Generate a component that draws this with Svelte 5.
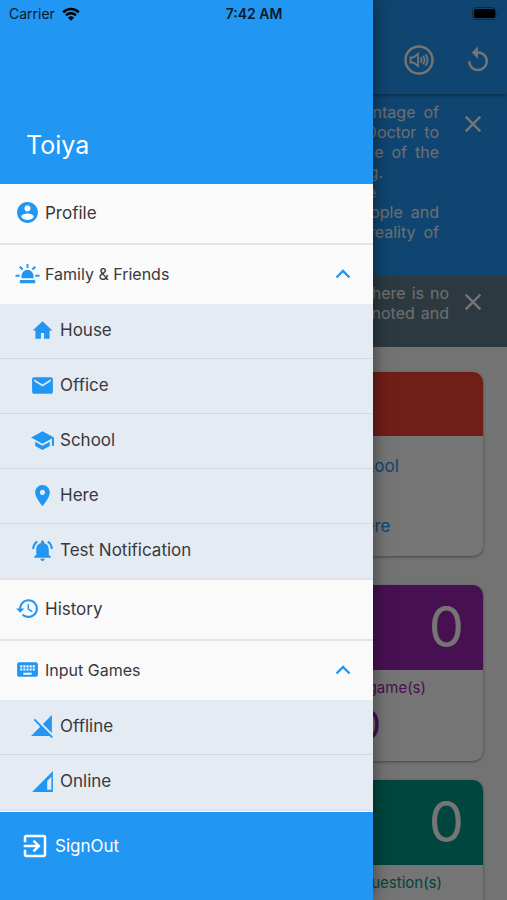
<script lang="ts">
    type Item = { label: string; icon: string; children?: Item[] };

    /** Filled shapes on a 24 unit grid. */
    const icons: Record<string, string> = {
        account: "M12 2C6.48 2 2 6.48 2 12s4.48 10 10 10 10-4.48 10-10S17.52 2 12 2zm0 3c1.66 0 3 1.34 3 3s-1.34 3-3 3-3-1.34-3-3 1.34-3 3-3zm0 14.2c-2.5 0-4.71-1.28-6-3.22.03-1.99 4-3.08 6-3.08 1.99 0 5.97 1.09 6 3.08-1.29 1.94-3.5 3.22-6 3.22z",
        beacon: "M6.2 16.500v-2.200a5.800 5.800 0 0 1 11.600 0v2.200zM5.600 18.300h12.800q1 0 1 1v2H4.600v-2q0-1 1-1zM11.100 2.800h1.800v4h-1.800zM3.900 6.200l1.400-1.400 2.700 2.700L6.600 8.900zM18.700 4.800l1.400 1.400-2.700 2.700L16 7.500zM.5 13.100h4v1.900h-4zM19.500 13.100h4v1.900h-4z",
        home: "M10.500 20v-5.500h3V20h5.300v-8h2.700L12 3l-9.500 9h2.700v8z",
        mail: "M20 4H4c-1.100 0-1.990.9-1.990 2L2 18c0 1.100.9 2 2 2h16c1.100 0 2-.9 2-2V6c0-1.100-.9-2-2-2zm0 4l-8 5-8-5V6l8 5 8-5v2z",
        school: "M5 13.180v4L12 21l7-3.820v-4L12 17l-7-3.820zM12 3L1 9l11 6 9-4.910V17h2V9L12 3z",
        pin: "M12 2C8.130 2 5 5.130 5 9c0 5.250 7 13 7 13s7-7.750 7-13c0-3.870-3.130-7-7-7zm0 9.500c-1.380 0-2.500-1.120-2.500-2.500s1.120-2.500 2.500-2.500 2.500 1.120 2.500 2.500-1.120 2.500-2.500 2.500z",
        bell: "M7.580 4.080L6.150 2.650C3.750 4.480 2.170 7.300 2.030 10.500h2c.15-2.650 1.510-4.970 3.550-6.420zm12.390 6.420h2c-.15-3.200-1.730-6.020-4.120-7.850l-1.420 1.430c2.020 1.450 3.390 3.770 3.540 6.420zM18 11c0-3.070-1.640-5.640-4.500-6.320V4c0-.83-.67-1.500-1.500-1.500s-1.500.67-1.500 1.500v.68C7.630 5.360 6 7.920 6 11v5l-2 2v1h16v-1l-2-2v-5zm-6 11c.14 0 .27-.01.4-.04.65-.14 1.180-.58 1.440-1.180.1-.24.15-.5.15-.78h-4c.01 1.100.9 2 2.010 2z",
        history: "M13 3c-4.970 0-9 4.030-9 9H1l3.890 3.890.07.14L9 12H6c0-3.870 3.130-7 7-7s7 3.130 7 7-3.130 7-7 7c-1.930 0-3.680-.79-4.940-2.060l-1.420 1.420C8.270 19.990 10.510 21 13 21c4.970 0 9-4.030 9-9s-4.030-9-9-9zm-1 5v5l4.280 2.540.72-1.210-3.500-2.080V8H12z",
        keyboard: "M20 5H4c-1.100 0-1.990.9-1.990 2L2 17c0 1.100.9 2 2 2h16c1.100 0 2-.9 2-2V7c0-1.100-.9-2-2-2zm-9 3h2v2h-2V8zm0 3h2v2h-2v-2zM8 8h2v2H8V8zm0 3h2v2H8v-2zm-1 2H5v-2h2v2zm0-3H5V8h2v2zm9 7H8v-2h8v2zm0-4h-2v-2h2v2zm0-3h-2V8h2v2zm3 3h-2v-2h2v2zm0-3h-2V8h2v2z",
        offline: "M21 1l-8.590 8.590L21 18.180V1zM4.770 4.500L3.500 5.770l6.360 6.360L1 21h17.730l2 2L22 21.730 4.770 4.500z",
        online: "M22 2v20H2zM20.500 7.500l-4 4V20h4z",
        exit: "M10.090 15.590L11.500 17l5-5-5-5-1.410 1.410L12.670 11H3v2h9.670l-2.580 2.590zM19 3H5c-1.110 0-2 .9-2 2v4h2V5h14v14H5v-4H3v4c0 1.100.89 2 2 2h14c1.100 0 2-.9 2-2V5c0-1.100-.9-2-2-2z",
        replay: "M12 5V1L7 6l5 5V7c3.310 0 6 2.690 6 6s-2.690 6-6 6-6-2.690-6-6H4c0 4.420 3.580 8 8 8s8-3.580 8-8-3.580-8-8-8z",
        close: "M19 6.410L17.590 5 12 10.590 6.410 5 5 6.410 10.590 12 5 17.590 6.410 19 12 13.410 17.590 19 19 17.590 13.410 12z",
    };

    const menu: Item[] = [
        { label: "Profile", icon: "account" },
        {
            label: "Family & Friends",
            icon: "beacon",
            children: [
                { label: "House", icon: "home" },
                { label: "Office", icon: "mail" },
                { label: "School", icon: "school" },
                { label: "Here", icon: "pin" },
                { label: "Test Notification", icon: "bell" },
            ],
        },
        { label: "History", icon: "history" },
        {
            label: "Input Games",
            icon: "keyboard",
            children: [
                { label: "Offline", icon: "offline" },
                { label: "Online", icon: "online" },
            ],
        },
    ];

    // each line holds its words and the free space after the last one
    const banners = [
        {
            tone: "info",
            lines: [
                { words: ["percentage", "of"], free: 0 },
                { words: ["Doctor", "to"], free: 0 },
                { words: ["me", "of", "the"], free: 0 },
                { words: ["ng."], free: 56 },
                { words: ["e"], free: 63 },
                { words: ["people", "and"], free: 0 },
                { words: ["reality", "of"], free: 0 },
            ],
        },
        {
            tone: "note",
            lines: [
                { words: ["There", "is", "no"], free: 0 },
                { words: ["noted", "and"], free: 0 },
            ],
        },
    ];

    const counters = [
        { tone: "purple", total: 0, caption: "game(s)", free: 57, part: 0 },
        { tone: "teal", total: 0, caption: "question(s)", free: 41 },
    ];

    let open: Record<string, boolean> = $state({
        "Family & Friends": true,
        "Input Games": true,
    });
</script>

{#snippet icon(name: string)}
    <svg class="icon" viewBox="0 0 24 24" aria-hidden="true">
        <path d={icons[name]} fill-rule="evenodd" />
    </svg>
{/snippet}

<div class="screen">
    <main class="page">
        <header class="bar">
            <button class="tool" aria-label="Sound">
                <svg class="sound" viewBox="0 0 30 30" aria-hidden="true">
                    <circle cx="15" cy="15" r="13.500" />
                    <path d="M6.500 12.500h3l4.500-3.700v12.400l-4.500-3.700h-3z" />
                    <path d="M16.500 12.300q2 2.700 0 5.400M19 10.800q3 4.200 0 8.400M21.500 9.300q4.200 5.700 0 11.400" />
                </svg>
            </button>
            <button class="tool" aria-label="Reload">{@render icon("replay")}</button>
        </header>

        {#each banners as banner}
            <section class="banner {banner.tone}">
                <div class="text">
                    {#each banner.lines as line}
                        <p class="line" style:padding-right="{line.free}px">
                            {#each line.words as word}
                                <span>{word}</span>
                            {/each}
                        </p>
                    {/each}
                </div>
                <button class="close" aria-label="Close">{@render icon("close")}</button>
            </section>
        {/each}

        <div class="cards">
            <article class="card red">
                <div class="head"></div>
                <div class="places">
                    <a href="#school">School</a>
                    <a href="#here">Here</a>
                </div>
            </article>
            {#each counters as c}
                <article class="card {c.tone}">
                    <div class="head">{c.total}</div>
                    <div class="stats">
                        <p class="caption" style:padding-right="{c.free}px">{c.caption}</p>
                        {#if c.part !== undefined}
                            <p class="part">{c.part}</p>
                        {/if}
                    </div>
                </article>
            {/each}
        </div>
    </main>

    <div class="scrim"></div>

    <aside class="drawer">
        <header class="user">Toiya</header>
        <nav class="menu">
            {#each menu as item}
                {#if item.children}
                    <button
                        class="row group"
                        aria-expanded={open[item.label]}
                        onclick={() => (open[item.label] = !open[item.label])}
                    >
                        {@render icon(item.icon)}
                        <span class="label">{item.label}</span>
                        <svg class="chevron" class:down={!open[item.label]} viewBox="0 0 16 10" aria-hidden="true">
                            <path d="M1.500 8.500L8 2l6.500 6.500" />
                        </svg>
                    </button>
                    {#if open[item.label]}
                        <div class="sub">
                            {#each item.children as child}
                                <a class="row child" href="#{child.icon}">
                                    {@render icon(child.icon)}
                                    <span class="label">{child.label}</span>
                                </a>
                            {/each}
                        </div>
                    {/if}
                {:else}
                    <a class="row top" href="#{item.icon}">
                        {@render icon(item.icon)}
                        <span class="label">{item.label}</span>
                    </a>
                {/if}
            {/each}
        </nav>
        <button class="signout">
            {@render icon("exit")}
            SignOut
        </button>
    </aside>

    <div class="status">
        <span class="carrier">
            Carrier
            <svg class="wifi" viewBox="0 0 18 14" aria-hidden="true">
                <path d="M1.200 5.300a11 11 0 0 1 15.600 0M4 8.300a7 7 0 0 1 10 0" />
                <path class="dot" d="M9 13.800l-3-3a4.300 4.300 0 0 1 6 0z" />
            </svg>
        </span>
        <span class="time">7:42 AM</span>
        <svg class="battery" viewBox="0 0 27 13" aria-hidden="true">
            <rect class="case" x=".5" y=".5" width="23" height="12" rx="3.500" />
            <rect x="2" y="2" width="21" height="9" rx="2" />
            <path class="tip" d="M25 4.500q2 2 0 4z" />
        </svg>
    </div>
</div>

<style>
    :global(body) {
        margin: 0;
    }

    .screen {
        position: relative;
        height: 100vh;
        overflow: hidden;
        font-family: Inter, Roboto, sans-serif;
        font-size: 16px;
        line-height: 20px;
        background: #fafafa;
    }

    p {
        margin: 0;
    }

    button {
        border: 0;
        padding: 0;
        background: none;
        font: inherit;
        color: inherit;
        text-align: left;
        cursor: pointer;
    }

    a {
        color: inherit;
        text-decoration: none;
    }

    .icon {
        display: block;
        flex: none;
        width: 25px;
        height: 25px;
        fill: currentColor;
    }

    /* page below the drawer */

    .bar {
        position: relative;
        display: flex;
        justify-content: flex-end;
        align-items: center;
        gap: 29px;
        height: 68px;
        padding: 26px 14px 0 0;
        background: #2196f3;
        color: #fff;
        box-shadow: 0 1px 4px rgba(0, 0, 0, 0.4);
    }

    .tool .icon {
        width: 30px;
        height: 30px;
    }

    .sound {
        display: block;
        width: 30px;
        height: 30px;
        fill: none;
        stroke: currentColor;
        stroke-width: 2.4;
    }

    .sound path {
        stroke-width: 1.8;
    }

    .banner {
        display: flex;
        justify-content: flex-end;
        align-items: flex-start;
        color: #f0f0f0;
    }

    .info {
        gap: 20px;
        padding: 8px 20px 33px 0;
        background: #2196f3;
    }

    .note {
        gap: 10px;
        padding: 8px 20px 24px 0;
        background: #607d8b;
    }

    .line {
        display: flex;
        justify-content: flex-end;
        gap: 8px;
    }

    .note .line {
        gap: 6px;
    }

    .close {
        margin-top: 5px;
        color: #fff;
    }

    .close .icon {
        width: 28px;
        height: 28px;
    }

    .info .close {
        margin-top: 8px;
    }

    .cards {
        display: flex;
        flex-direction: column;
        gap: 19px;
        padding: 25px 24px;
    }

    .card {
        overflow: hidden;
        border-radius: 10px;
        background: #fff;
        box-shadow: 0 1px 3px rgba(0, 0, 0, 0.4);
    }

    .card.red {
        margin-bottom: 10px;
    }

    .head {
        height: 85px;
        padding-right: 19px;
        font-size: 56px;
        line-height: 85px;
        text-align: right;
    }

    .red .head {
        height: 64px;
        background: #f44336;
    }

    .purple {
        color: #9c27b0;
    }

    .purple .head {
        background: #9c27b0;
    }

    .teal {
        color: #009688;
    }

    .teal .head {
        background: #009688;
    }

    .card .head {
        color: #fff;
    }

    .places,
    .part {
        width: 50%;
        margin-left: auto;
        text-align: center;
    }

    .places {
        box-sizing: border-box;
        padding-left: 6px;
        color: #2196f3;
        font-size: 17px;
    }

    .places a {
        display: block;
        line-height: 60px;
    }

    .caption {
        padding-top: 8px;
        font-size: 15px;
        text-align: right;
    }

    .part {
        padding: 7px 0 16px;
        font-size: 40px;
        line-height: 40px;
    }

    .teal .stats {
        min-height: 91px;
    }

    .scrim {
        position: absolute;
        inset: 0;
        background: rgba(0, 0, 0, 0.54);
    }

    /* drawer */

    .drawer {
        position: absolute;
        inset: 0 134px 0 0;
        display: flex;
        flex-direction: column;
        background: #fafafa;
        color: #37393d;
        font-size: 17px;
        box-shadow: 0 0 16px rgba(0, 0, 0, 0.5);
    }

    .user {
        padding: 129px 26px 23px;
        background: #2196f3;
        color: #fff;
        font-size: 25px;
        line-height: 32px;
    }

    .menu {
        flex: 1;
        overflow: hidden;
    }

    .row {
        display: flex;
        align-items: center;
        box-sizing: border-box;
        width: 100%;
        gap: 5px;
    }

    .row .icon {
        color: #2196f3;
    }

    .top {
        height: 61px;
        padding: 0 15px 2px;
        border-bottom: 2px solid #e2e4e6;
    }

    .group {
        height: 59px;
        padding: 0 22px 2px 15px;
        font-size: 16px;
    }

    .sub {
        border-bottom: 2px solid #e2e4e6;
        background: #e5ebf3;
    }

    .child {
        height: 55px;
        padding: 0 30px 2px;
        border-bottom: 1px solid #d5dae1;
    }

    .child:last-child {
        height: 54px;
        border-bottom: 0;
    }

    .label {
        flex: 1;
    }

    .chevron {
        width: 16px;
        height: 10px;
        fill: none;
        stroke: #2196f3;
        stroke-width: 2.4;
    }

    .chevron.down {
        transform: rotate(180deg);
    }

    .signout {
        display: flex;
        align-items: center;
        gap: 5px;
        height: 88px;
        padding: 0 20px 20px;
        background: #2196f3;
        color: #fff;
    }

    .signout .icon {
        width: 30px;
        height: 30px;
    }

    /* status bar over everything */

    .status {
        position: absolute;
        inset: 0 0 auto;
        display: grid;
        grid-template-columns: 1fr auto 1fr;
        align-items: center;
        height: 27px;
        padding: 0 8px 0 9px;
        font-size: 14px;
        color: #0a1a2a;
    }

    .carrier {
        display: flex;
        align-items: center;
        gap: 7px;
    }

    .wifi {
        width: 18px;
        height: 14px;
        fill: none;
        stroke: #000;
        stroke-width: 2.4;
    }

    .wifi .dot {
        fill: #000;
        stroke: none;
    }

    .time {
        font-weight: 600;
    }

    .battery {
        justify-self: end;
        width: 27px;
        height: 13px;
    }

    .battery .case {
        fill: none;
        stroke: rgba(0, 0, 0, 0.35);
    }

    .battery .tip {
        fill: rgba(0, 0, 0, 0.35);
    }
</style>
